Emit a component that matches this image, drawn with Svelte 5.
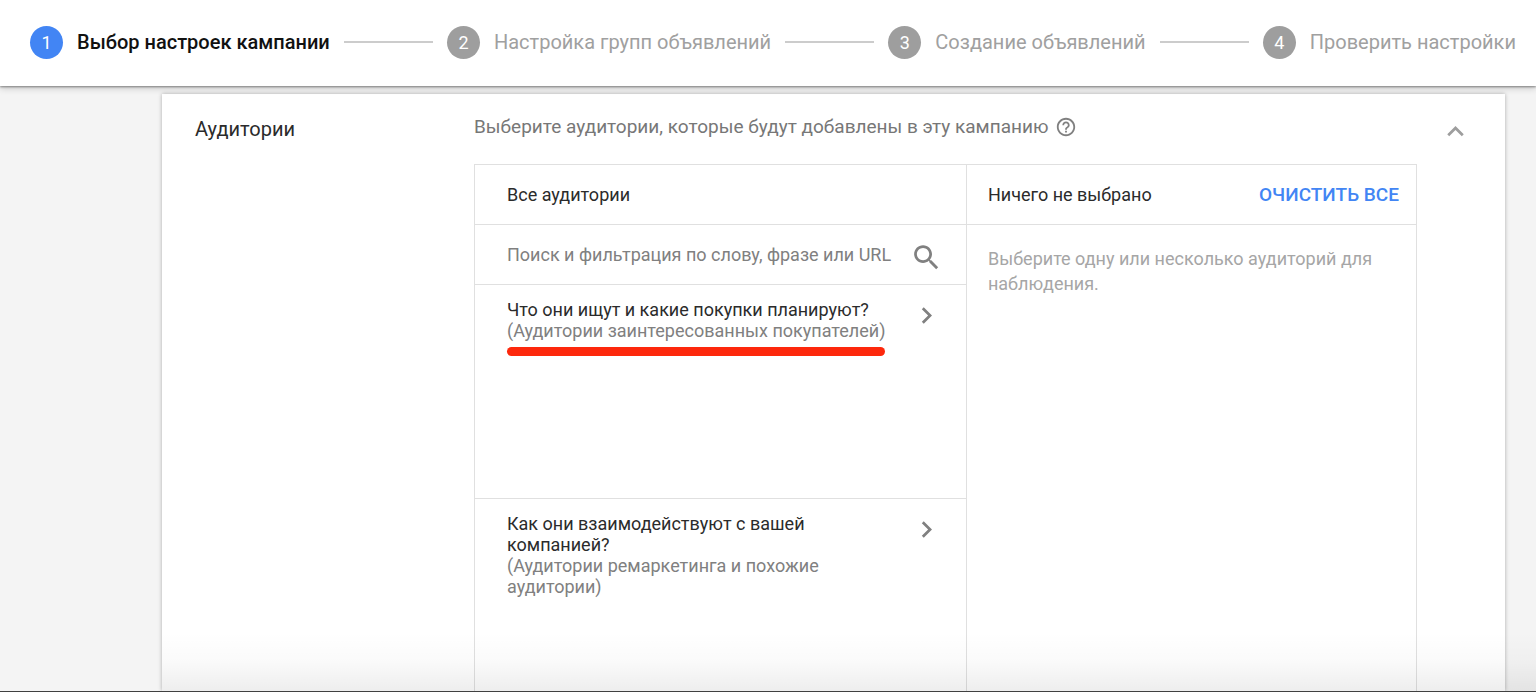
<script lang="ts">
  interface Step {
    number: number;
    label: string;
  }

  interface AudienceGroup {
    question: string;
    hint: string;
    marked?: boolean;
  }

  const steps: Step[] = [
    { number: 1, label: 'Выбор настроек кампании' },
    { number: 2, label: 'Настройка групп объявлений' },
    { number: 3, label: 'Создание объявлений' },
    { number: 4, label: 'Проверить настройки' }
  ];

  const groups: AudienceGroup[] = [
    {
      question: 'Что они ищут и какие покупки планируют?',
      hint: '(Аудитории заинтересованных покупателей)',
      marked: true
    },
    {
      question: 'Как они взаимодействуют с вашей компанией?',
      hint: '(Аудитории ремаркетинга и похожие аудитории)'
    }
  ];

  let current = $state(1);
  let expanded = $state(true);
  let query = $state('');
</script>

<div class="page">
  <nav class="stepper">
    {#each steps as step, i}
      {#if i > 0}
        <span class="line"></span>
      {/if}
      <button
        class="step"
        class:active={step.number === current}
        onclick={() => (current = step.number)}
      >
        <span class="circle">{step.number}</span>
        <span class="step-label">{step.label}</span>
      </button>
    {/each}
  </nav>

  <main class="card">
    <h2 class="card-title">Аудитории</h2>

    <section class="content">
      <div class="intro">
        <p>Выберите аудитории, которые будут добавлены в эту кампанию</p>
        <button class="icon-btn" aria-label="Справка">
          <svg width="22" height="22" viewBox="0 0 24 24" fill="currentColor">
            <path d="M11 18h2v-2h-2v2zm1-16C6.48 2 2 6.48 2 12s4.48 10 10 10 10-4.480 10-10S17.520 2 12 2zm0 18c-4.410 0-8-3.590-8-8s3.590-8 8-8 8 3.590 8 8-3.590 8-8 8zm0-14c-2.210 0-4 1.790-4 4h2c0-1.100.9-2 2-2s2 .9 2 2c0 2-3 1.750-3 5h2c0-2.250 3-2.500 3-5 0-2.210-1.790-4-4-4z" />
          </svg>
        </button>
      </div>

      {#if expanded}
        <div class="picker">
          <div class="pane">
            <div class="pane-head">
              <h3>Все аудитории</h3>
            </div>
            <div class="search">
              <input
                type="text"
                aria-label="Поиск аудиторий"
                placeholder="Поиск и фильтрация по слову, фразе или URL"
                bind:value={query}
              />
              <button class="icon-btn" aria-label="Найти">
                <svg width="33" height="33" viewBox="0 0 24 24" fill="currentColor">
                  <path d="M15.5 14h-.79l-.28-.27C15.41 12.590 16 11.110 16 9.500 16 5.910 13.090 3 9.500 3S3 5.910 3 9.500 5.910 16 9.500 16c1.610 0 3.090-.59 4.230-1.570l.27.28v.79l5 4.990L20.490 19l-4.990-5zm-6 0C7.010 14 5 11.990 5 9.500S7.010 5 9.500 5 14 7.010 14 9.500 11.990 14 9.500 14z" />
                </svg>
              </button>
            </div>
            {#each groups as group}
              <button class="group">
                <span class="group-text">
                  <span class="question">{group.question}</span>
                  <span class="hint" class:marked={group.marked}>{group.hint}</span>
                </span>
                <svg width="33" height="33" viewBox="0 0 24 24" fill="currentColor">
                  <path d="M10 6 8.590 7.410 13.170 12l-4.580 4.590L10 18l6-6z" />
                </svg>
              </button>
            {/each}
          </div>

          <div class="pane">
            <div class="pane-head selected-head">
              <h3>Ничего не выбрано</h3>
              <button class="clear">ОЧИСТИТЬ ВСЕ</button>
            </div>
            <p class="empty">Выберите одну или несколько аудиторий для наблюдения.</p>
          </div>
        </div>
      {/if}
    </section>

    <button
      class="icon-btn collapse"
      aria-label="Свернуть"
      aria-expanded={expanded}
      onclick={() => (expanded = !expanded)}
    >
      <svg width="33" height="33" viewBox="0 0 24 24" fill="currentColor">
        <path d="m12 8-6 6 1.410 1.410L12 10.830l4.590 4.580L18 14z" />
      </svg>
    </button>
  </main>

  <div class="bottom-shade"></div>
</div>

<style>
  :global(body) {
    margin: 0;
    background: #f4f4f4;
  }

  .page {
    position: relative;
    display: flex;
    flex-direction: column;
    height: 100vh;
    overflow: hidden;
    background: #f4f4f4;
    font-family: Roboto, 'Liberation Sans', sans-serif;
    color: #2b2b2b;
  }

  h2,
  h3,
  p {
    margin: 0;
    font-weight: 400;
  }

  button {
    padding: 0;
    border: none;
    background: none;
    font: inherit;
    color: inherit;
    text-align: left;
    cursor: pointer;
  }

  svg {
    display: block;
    flex: none;
  }

  .stepper {
    position: relative;
    z-index: 1;
    display: flex;
    align-items: center;
    flex: none;
    height: 86px;
    box-sizing: border-box;
    padding: 0 20px 2px 30px;
    background: #fff;
    box-shadow:
      0 1px 2px rgba(0, 0, 0, 0.4),
      0 2px 7px rgba(0, 0, 0, 0.2);
  }

  .step {
    display: flex;
    align-items: center;
    gap: 14px;
    font-size: 20px;
    line-height: 24px;
    white-space: nowrap;
    color: #a0a0a0;
  }

  .circle {
    width: 33px;
    height: 33px;
    border-radius: 50%;
    background: #9e9e9e;
    color: #fff;
    font-size: 18px;
    line-height: 33px;
    text-align: center;
  }

  .active {
    color: #111;
    font-weight: 500;
  }

  .active .circle {
    background: #4285f4;
    font-weight: 400;
  }

  .line {
    flex: 1;
    height: 2px;
    margin: 0 14px 0 14px;
    background: #ccc;
  }

  .card {
    display: grid;
    grid-template-columns: 279px 1fr 55px;
    flex: 1;
    min-height: 0;
    box-sizing: border-box;
    margin: 8px 31px 0 162px;
    padding: 0 33px;
    background: #fff;
    box-shadow: 0 0 4px rgba(0, 0, 0, 0.3);
  }

  .card-title {
    padding-top: 23px;
    font-size: 20px;
    line-height: 24px;
  }

  .content {
    display: flex;
    flex-direction: column;
    min-height: 0;
  }

  .intro {
    display: flex;
    align-items: center;
    gap: 7px;
    flex: none;
    height: 70px;
    box-sizing: border-box;
    padding-bottom: 4px;
    font-size: 19px;
    line-height: 24px;
    color: #777;
  }

  .icon-btn {
    color: #808080;
  }

  .picker {
    display: grid;
    grid-template-columns: 492fr 451fr;
    flex: 1;
    min-height: 0;
    border: 1px solid #e0e0e0;
    border-bottom: none;
  }

  .pane + .pane {
    border-left: 1px solid #e0e0e0;
  }

  .pane-head,
  .search {
    display: flex;
    align-items: center;
    justify-content: space-between;
    height: 60px;
    box-sizing: border-box;
    padding: 0 23px 0 32px;
    border-bottom: 1px solid #e0e0e0;
  }

  .pane-head h3 {
    font-size: 18px;
    line-height: 20px;
  }

  .pane-head.selected-head {
    padding: 0 17px 0 21px;
  }

  .clear {
    font-size: 19px;
    font-weight: 500;
    line-height: 24px;
    color: #4285f4;
  }

  .search .icon-btn {
    padding-top: 5px;
  }

  .search input {
    flex: 1;
    min-width: 0;
    padding: 0;
    border: none;
    outline: none;
    background: none;
    font: inherit;
    font-size: 18px;
    line-height: 20px;
    color: inherit;
  }

  .search input::placeholder {
    color: #808080;
    opacity: 1;
  }

  .group {
    display: flex;
    align-items: flex-start;
    justify-content: space-between;
    width: 100%;
    height: 214px;
    box-sizing: border-box;
    padding: 14px 23px 0 32px;
    border-bottom: 1px solid #e0e0e0;
    font-size: 18px;
    line-height: 21px;
  }

  .group-text {
    display: flex;
    flex-direction: column;
    align-items: flex-start;
    max-width: 384px;
  }

  .group svg {
    color: #808080;
  }

  .hint {
    color: #808080;
  }

  .marked::after {
    content: '';
    display: block;
    height: 9px;
    margin-top: 6px;
    border-radius: 5px;
    background: #fd280c;
  }

  .empty {
    padding: 21px 40px 0 21px;
    font-size: 18px;
    line-height: 25px;
    color: #a6a6a6;
  }

  .collapse {
    display: flex;
    justify-content: flex-end;
    align-self: start;
    padding-top: 21px;
    color: #9e9e9e;
  }

  .bottom-shade {
    position: absolute;
    right: 0;
    bottom: 0;
    left: 162px;
    height: 60px;
    background: linear-gradient(
      to bottom,
      rgba(0, 0, 0, 0),
      rgba(0, 0, 0, 0.02) 50%,
      rgba(0, 0, 0, 0.07)
    );
    pointer-events: none;
  }

  .page::after {
    content: '';
    position: relative;
    flex: none;
    height: 1px;
    background: #404040;
  }
</style>
